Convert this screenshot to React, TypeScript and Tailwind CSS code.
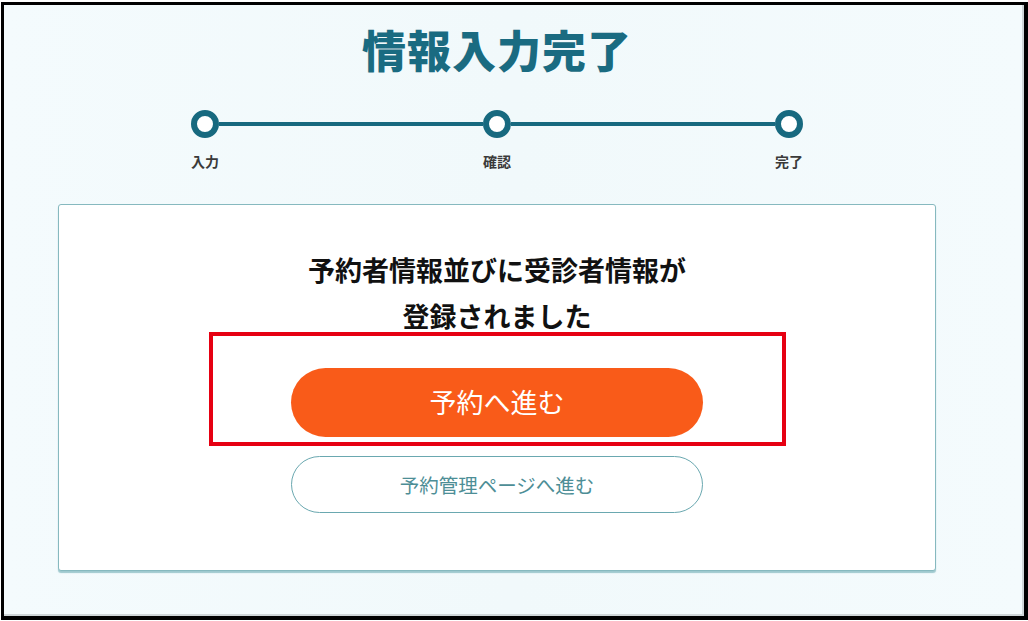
import React from "react";

const font = { fontFamily: '"Noto Sans CJK JP", "Noto Sans", sans-serif' };

function Ring() {
  return <div className="w-[28px] h-[28px] shrink-0 rounded-full border-[6px] border-[#17697f] bg-white" />;
}

export default function App() {
  return (
    <div className="w-[1028px] h-[621px] bg-white pt-[2px] pl-[1px] pr-[0px] pb-[1px]" style={font}>
      <div className="h-full border-l-[3px] border-t-[3px] border-r-[4px] border-b-[4px] border-black">
        <div className="h-full border-r-2 border-b-2 border-[#cfd6d8] bg-gradient-to-r from-[#f4fbfd] via-[#f1f9fb] to-[#f4fbfd] pl-[54px] pr-[86px] pt-[22px]">
          <h1 className="text-center text-[44px] leading-[44px] font-black text-[#1a6b81] tracking-[1px]">
            情報入力完了
          </h1>

          <div className="w-[612px] mx-auto mt-[39px]">
            <div className="flex items-center">
              <Ring />
              <div className="flex-1 h-[4px] bg-[#17697f]" />
              <Ring />
              <div className="flex-1 h-[4px] bg-[#17697f]" />
              <Ring />
            </div>
            <div className="flex justify-between mt-[16px] text-[14px] leading-[14px] font-bold text-[#3a3a3a]">
              <span className="w-[28px] text-center whitespace-nowrap">入力</span>
              <span className="w-[28px] text-center whitespace-nowrap">確認</span>
              <span className="w-[28px] text-center whitespace-nowrap">完了</span>
            </div>
          </div>

          <div className="mt-[36px] bg-white border border-[#86b9bf] rounded-[3px] shadow-[0_2px_1px_rgba(90,160,170,0.55)] pt-[47px] pb-[57px]">
            <p className="text-center text-[27px] leading-[36px] font-bold text-[#111]">
              予約者情報並びに受診者情報が
            </p>
            <p className="text-center text-[27px] leading-[30px] font-bold text-[#111] mt-[13px]">
              登録されました
            </p>
            <div className="mx-auto mt-[1px] w-[577px] border-[4px] border-[#e60012] pt-[32px] pb-[5px] flex justify-center">
              <button className="w-[412px] h-[69px] rounded-full bg-[#f95b19] text-white text-[27px] font-normal">
                予約へ進む
              </button>
            </div>
            <div className="flex justify-center mt-[10px]">
              <button className="w-[412px] h-[57px] rounded-full border border-[#6aa8b0] bg-white text-[#4d8e96] text-[19.5px] font-normal">
                予約管理ページへ進む
              </button>
            </div>
          </div>
        </div>
      </div>
    </div>
  );
}
